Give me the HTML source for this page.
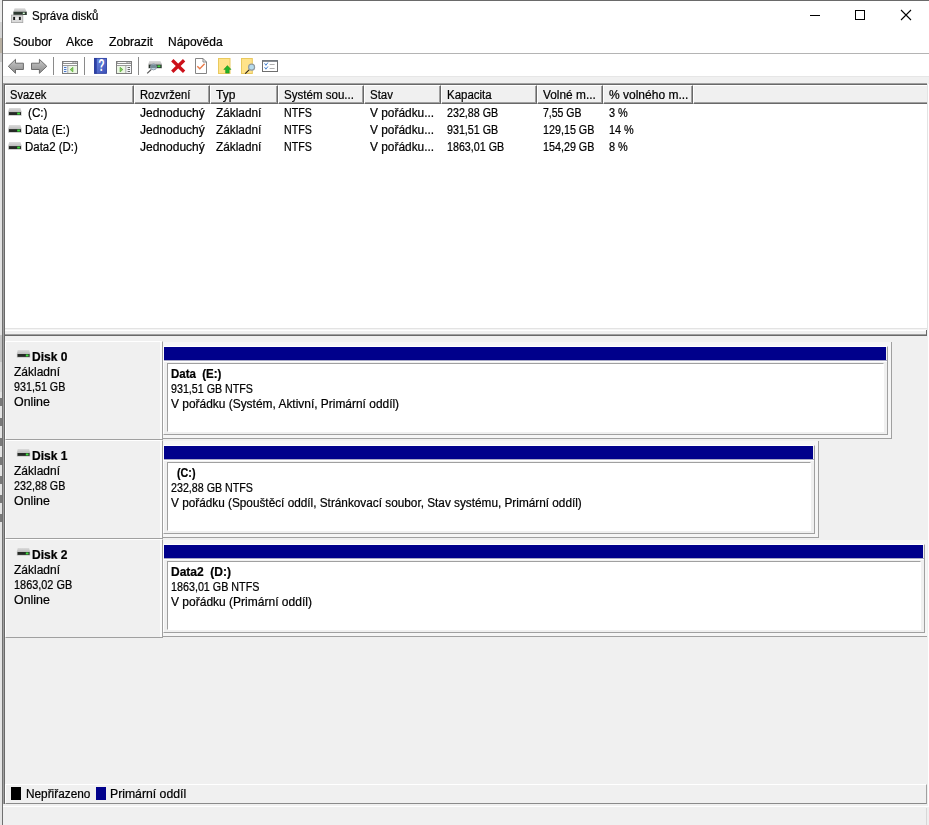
<!DOCTYPE html>
<html lang="cs"><head><meta charset="utf-8"><title>Správa disků</title>
<style>
html,body{margin:0;padding:0}
body{width:929px;height:825px;overflow:hidden;position:relative;background:#f0f0f0;font-family:"Liberation Sans",sans-serif;font-size:12px;color:#000}
div,span,svg{position:absolute;box-sizing:border-box}
.t{-webkit-text-stroke:.22px #000;transform-origin:0 0;white-space:pre;line-height:15px;height:15px;color:#000}
.w{background:#fff}
.hl{height:1px}
.vl{width:1px}
.hd{top:85px;height:19px;background:#f0f0f0;border-top:1px solid #fff;border-left:1px solid #fff;border-bottom:1px solid #696969;border-right:1px solid #696969}
.hd i{position:absolute;left:0;right:0;bottom:0;height:1px;background:#a0a0a0}
.hd b{position:absolute;top:0;bottom:0;right:0;width:1px;background:#a0a0a0}
.lab{box-shadow:inset -2px 0 0 #fbfbfb;left:5px;width:158px;height:99px;background:#f0f0f0;border-top:1px solid #fff;border-left:1px solid #fff;border-right:1px solid #a0a0a0;border-bottom:1px solid #a0a0a0}
.fr{left:163px;height:97px;background:#f6f6f6;border-right:1px solid #a0a0a0;border-bottom:1px solid #a0a0a0}
.pt{left:0;top:4px;height:89px;background:#f0f0f0;border-left:1px solid #fff;border-top:1px solid #fff;border-right:1px solid #a0a0a0;border-bottom:1px solid #a0a0a0}
.nv{left:0;top:0;right:1px;height:13px;background:#00008b}
.nl{left:0;right:0;top:13px;height:1px;background:#a9a9c4}
.nw{left:0;right:0;top:14px;height:1px;background:#fff}
.in{left:3px;right:3px;top:16px;bottom:2px;background:#fff;border-left:1px solid #a0a0a0;border-top:1px solid #a0a0a0;border-right:1px solid #fff;border-bottom:1px solid #fff}
#texts{left:0;top:0;width:929px;height:825px;will-change:transform}

</style></head>
<body>
<!-- desktop strip + window border -->
<div style="left:0;top:0;width:2px;height:825px;background:linear-gradient(#ececec 0,#ececec 22px,#d4d4d4 22px,#d4d4d4 38px,#b8b0a2 38px,#b8b0a2 53px,#c8c8c8 53px,#c8c8c8 62px,#e2e2e2 62px,#e2e2e2 335px,#c4c4c4 335px,#c4c4c4 362px,#d8d8d8 362px,#d8d8d8 392px,#e4e4e4 392px,#e4e4e4 825px)"></div><div style="left:0;top:398px;width:2px;height:8px;background:#555;opacity:.75"></div><div style="left:0;top:418px;width:2px;height:8px;background:#555;opacity:.75"></div><div style="left:0;top:438px;width:2px;height:8px;background:#555;opacity:.75"></div><div style="left:0;top:457px;width:2px;height:8px;background:#555;opacity:.75"></div><div style="left:0;top:476px;width:2px;height:8px;background:#555;opacity:.75"></div><div style="left:0;top:495px;width:2px;height:8px;background:#555;opacity:.75"></div><div style="left:0;top:514px;width:2px;height:8px;background:#555;opacity:.75"></div>
<div class="vl" style="left:2px;top:0;height:825px;background:#707070"></div>
<div class="hl" style="left:2px;top:0;width:927px;background:#6a6a6a"></div>
<!-- title + menu -->
<div class="w" style="left:3px;top:1px;width:926px;height:52px"></div>
<div class="hl" style="left:3px;top:53px;width:926px;background:#b4b4b4"></div>
<!-- toolbar -->
<div class="w" style="left:3px;top:54px;width:926px;height:22px"></div>
<div class="hl" style="left:3px;top:76px;width:926px;background:#e6e6e6"></div>
<!-- list view sunken border -->
<div class="hl" style="left:3px;top:83px;width:924px;background:#a0a0a0"></div>
<div class="hl" style="left:4px;top:84px;width:923px;background:#696969"></div>
<div class="vl" style="left:3px;top:83px;height:721px;background:#a0a0a0"></div>
<div class="vl" style="left:4px;top:84px;height:720px;background:#696969"></div>
<div class="w" style="left:5px;top:85px;width:922px;height:243px"></div>
<div class="vl" style="left:927px;top:84px;height:246px;background:#e3e3e3"></div>
<div class="vl" style="left:928px;top:84px;height:722px;background:#fff"></div>
<!-- header cells -->
<div class="hd" style="left:5px;width:129px"><i></i><b></b></div>
<div class="hd" style="left:134px;width:76px"><i></i><b></b></div>
<div class="hd" style="left:210px;width:68px"><i></i><b></b></div>
<div class="hd" style="left:278px;width:86px"><i></i><b></b></div>
<div class="hd" style="left:364px;width:77px"><i></i><b></b></div>
<div class="hd" style="left:441px;width:96px"><i></i><b></b></div>
<div class="hd" style="left:537px;width:66px"><i></i><b></b></div>
<div class="hd" style="left:603px;width:90px"><i></i><b></b></div>
<div class="hd" style="left:693px;width:234px;border-right:0"><i></i></div>
<!-- splitter -->
<div class="hl" style="left:5px;top:328px;width:922px;background:#e3e3e3"></div>
<div class="hl" style="left:5px;top:329px;width:922px;background:#f4f4f4"></div>
<div class="hl" style="left:5px;top:330px;width:922px;background:#fff"></div>
<div class="hl" style="left:5px;top:334px;width:922px;background:#a0a0a0"></div>
<div class="hl" style="left:5px;top:335px;width:922px;background:#696969"></div>
<div class="vl" style="left:926px;top:330px;height:6px;background:#696969"></div>
<div style="left:927px;top:330px;width:1px;height:476px;background:#f0f0f0"></div>
<!-- disk rows -->
<div class="lab" style="top:341px"></div>
<div class="lab" style="top:440px"></div>
<div class="lab" style="top:539px"></div>
<div class="fr" style="top:342px;width:729px"><div class="pt" style="width:725px"><div class="nv"></div><div class="nl"></div><div class="nw"></div><div class="in"></div></div></div>
<div class="fr" style="top:441px;width:656px"><div class="pt" style="width:652px"><div class="nv"></div><div class="nl"></div><div class="nw"></div><div class="in"></div></div></div>
<div class="fr" style="top:540px;width:764px;border-right:0"><div class="pt" style="width:762px"><div class="nv"></div><div class="nl"></div><div class="nw"></div><div class="in"></div></div></div>
<!-- legend -->
<div style="left:5px;top:784px;width:922px;height:20px;background:#f0f0f0;border-top:1px solid #fff;border-left:1px solid #fff;border-right:1px solid #a0a0a0;border-bottom:1px solid #8a8a8a"></div>
<div style="left:11px;top:787px;width:10px;height:13px;background:#000"></div>
<div style="left:96px;top:787px;width:10px;height:13px;background:#00008b"></div>
<!-- status bar -->
<div class="hl" style="left:3px;top:806px;width:926px;background:#fff"></div>
<div class="vl" style="left:926px;top:808px;height:17px;background:#d7d7d7"></div>
<svg style="left:0;top:0" width="929" height="825" viewBox="0 0 929 825">
<defs>
<linearGradient id="ga" x1="0" y1="0" x2="0" y2="1"><stop offset="0" stop-color="#cacaca"/><stop offset="1" stop-color="#8a8a8a"/></linearGradient>
<linearGradient id="gh" x1="0" y1="0" x2="1" y2="1"><stop offset="0" stop-color="#6f8be0"/><stop offset="1" stop-color="#3a50b8"/></linearGradient>
<linearGradient id="gd" x1="0" y1="0" x2="0" y2="1"><stop offset="0" stop-color="#dcdcdc"/><stop offset="1" stop-color="#bcbcbc"/></linearGradient>
</defs>
<!-- title icon -->
<g>
<polygon points="14.6,8.2 25,8.2 26.6,11.8 13.4,11.8" fill="url(#gd)"/>
<rect x="13.4" y="11.7" width="13.4" height="3.3" fill="#2e3a32"/>
<rect x="22.8" y="12.6" width="2" height="1.5" fill="#d8ffd8"/>
<rect x="11.4" y="15.1" width="11.4" height="7.5" fill="#dadada" stroke="#a4a4a4" stroke-width=".8"/>
<rect x="15" y="17.6" width="4" height="1.8" fill="#f4f4f4"/>
<rect x="13.2" y="16.9" width="1.9" height="3.1" fill="#1c1c1c"/>
<rect x="18.9" y="16.9" width="1.9" height="3.1" fill="#1c1c1c"/>
</g>
<!-- window controls -->
<rect x="810" y="15" width="10" height="1" fill="#000"/>
<rect x="855.5" y="10.5" width="9" height="9" fill="none" stroke="#000" stroke-width="1"/>
<path d="M901,10 L911,20 M911,10 L901,20" stroke="#000" stroke-width="1.1" fill="none"/>
<!-- toolbar: arrows -->
<polygon points="8.3,66.3 15.5,59.3 15.5,63.2 23.4,63.2 23.4,69.5 15.5,69.5 15.5,73.3" fill="url(#ga)" stroke="#6c6c6c" stroke-width="1" stroke-linejoin="round"/>
<polygon points="46.8,66.3 39.4,59.3 39.4,63.2 31.5,63.2 31.5,69.5 39.4,69.5 39.4,73.3" fill="url(#ga)" stroke="#6c6c6c" stroke-width="1" stroke-linejoin="round"/>
<!-- separators -->
<rect x="53" y="57" width="1" height="18" fill="#8a8a8a"/>
<rect x="84" y="57" width="1" height="18" fill="#8a8a8a"/>
<rect x="138" y="57" width="1" height="18" fill="#8a8a8a"/>
<!-- show/hide tree -->
<g>
<rect x="62.5" y="61.5" width="15" height="12" fill="#fff" stroke="#7d7d7d"/>
<rect x="63" y="62" width="14" height="2" fill="#909090"/>
<rect x="63.5" y="62" width="9" height="1" fill="#fafafa"/>
<rect x="73.6" y="62" width="1" height="1" fill="#fafafa"/><rect x="75.6" y="62" width="1" height="1" fill="#fafafa"/>
<rect x="63" y="65" width="14" height="1" fill="#9a9a9a"/>
<rect x="63" y="66" width="4.5" height="7" fill="#eef4fc"/>
<rect x="67.5" y="66" width="1" height="7" fill="#8c8c8c"/>
<rect x="68.5" y="66" width="8.5" height="7" fill="#ecf7e4"/>
<rect x="64" y="67" width="2.4" height="1" fill="#4a7ac8"/><rect x="64" y="69" width="2.4" height="1" fill="#4a7ac8"/><rect x="64" y="71" width="2.4" height="1" fill="#4a7ac8"/>
<polygon points="70.2,69.6 72.9,67.3 72.9,71.9" fill="#86cc5e" stroke="#58aa36" stroke-width=".7"/>
</g>
<!-- help -->
<g>
<rect x="94.2" y="58" width="12.6" height="15.6" fill="url(#gh)"/>
<rect x="94.2" y="58" width="2.6" height="15.6" fill="#2c42a6"/>
<rect x="94.5" y="58.3" width="12" height="15" fill="none" stroke="#2a3a98" stroke-width=".7"/>
<text transform="translate(101.3,71.4) scale(.64,1)" font-family="Liberation Sans, sans-serif" font-size="16.2" font-weight="bold" fill="#fff" text-anchor="middle">?</text>
</g>
<!-- action pane -->
<g>
<rect x="116.5" y="61.5" width="15" height="12" fill="#fff" stroke="#7d7d7d"/>
<rect x="117" y="62" width="14" height="2" fill="#909090"/>
<rect x="117.5" y="62" width="9" height="1" fill="#fafafa"/>
<rect x="127.6" y="62" width="1" height="1" fill="#fafafa"/><rect x="129.6" y="62" width="1" height="1" fill="#fafafa"/>
<rect x="117" y="65" width="14" height="1" fill="#9a9a9a"/>
<rect x="117" y="66" width="8.5" height="7" fill="#ecf7e4"/>
<rect x="125.5" y="66" width="1" height="7" fill="#8c8c8c"/>
<rect x="126.5" y="66" width="4.5" height="7" fill="#f4f6fa"/>
<rect x="127.6" y="67" width="2.4" height="1" fill="#6a6a6a"/><rect x="127.6" y="69" width="2.4" height="1" fill="#6a6a6a"/><rect x="127.6" y="71" width="2.4" height="1" fill="#6a6a6a"/>
<polygon points="122.8,69.6 120.1,67.3 120.1,71.9" fill="#86cc5e" stroke="#58aa36" stroke-width=".7"/>
</g>
<!-- disk + magnifier -->
<g>
<polygon points="149.4,61 160.4,61 162,64.3 148.2,64.3" fill="url(#gd)"/>
<rect x="148.2" y="64.2" width="13.8" height="4.4" fill="#c4c4c4"/>
<rect x="148.8" y="64.6" width="12.8" height="3.4" fill="#26322a"/>
<rect x="157.4" y="65.4" width="3" height="1.8" fill="#48d848"/>
<line x1="151.4" y1="69.4" x2="147.2" y2="73.4" stroke="#585858" stroke-width="1.3"/>
<circle cx="153.5" cy="66.9" r="3" fill="#a9c6dc" fill-opacity=".6" stroke="#8a98a6" stroke-width=".9"/>
</g>
<!-- red X -->
<path d="M172.3,60.2 L184.1,71.7 M184.1,60.2 L172.3,71.7" stroke="#cc101a" stroke-width="3.3" fill="none"/>
<!-- properties doc -->
<g>
<path d="M195.5,58.5 H203 L206.5,62 V73.5 H195.5 Z" fill="#fff" stroke="#858585"/>
<path d="M203,58.5 V62 H206.5" fill="none" stroke="#7c7c7c" stroke-width=".9"/>
<polyline points="197.3,66.2 199.8,68.8 204.6,63.8" fill="none" stroke="#ea7a48" stroke-width="1.35"/>
</g>
<!-- yellow up -->
<g>
<rect x="218.5" y="58.5" width="11.5" height="15" fill="#ffe38a" stroke="#e9c95e"/>
<polygon points="227.4,65.6 231,69.4 229.2,69.4 229.2,73.1 225.6,73.1 225.6,69.4 223.8,69.4" fill="#22b326" stroke="#1c8c1e" stroke-width=".5"/>
</g>
<!-- yellow search -->
<g>
<rect x="241.5" y="58.5" width="10.8" height="15" fill="#ffe38a" stroke="#e9c95e"/>
<line x1="249.6" y1="69.4" x2="245.2" y2="73.6" stroke="#2c2418" stroke-width="1.15"/>
<circle cx="251.6" cy="67.2" r="3" fill="#b6dcee" stroke="#909aa0" stroke-width="1.2"/>
</g>
<!-- checklist -->
<g>
<rect x="262.5" y="60.8" width="15" height="10.7" fill="#fff" stroke="#6e6e6e"/>
<rect x="262" y="60.2" width="16" height="1.5" fill="#6a7078"/>
<polyline points="264.6,63.3 265.9,65.3 267.9,62.6" fill="none" stroke="#3c7acc" stroke-width=".95"/>
<polyline points="264.6,67.2 265.9,69.2 267.9,66.5" fill="none" stroke="#3c7acc" stroke-width=".95"/>
<rect x="269.6" y="64" width="5" height="1" fill="#b0b0b0"/><rect x="269.6" y="68" width="5" height="1" fill="#b0b0b0"/>
</g>
<g transform="translate(8.2,108)"><polygon points="0.9,0 12.3,0 13.4,4 0,4" fill="url(#gd)"/><rect x="0" y="3.8" width="13.5" height="4" fill="#c6c6c6"/><rect x="0.7" y="4.1" width="12.1" height="2.9" fill="#262a26"/><rect x="9" y="4.6" width="2.7" height="1.9" fill="#3fe03f"/></g>
<g transform="translate(8.2,125)"><polygon points="0.9,0 12.3,0 13.4,4 0,4" fill="url(#gd)"/><rect x="0" y="3.8" width="13.5" height="4" fill="#c6c6c6"/><rect x="0.7" y="4.1" width="12.1" height="2.9" fill="#262a26"/><rect x="9" y="4.6" width="2.7" height="1.9" fill="#3fe03f"/></g>
<g transform="translate(8.2,142)"><polygon points="0.9,0 12.3,0 13.4,4 0,4" fill="url(#gd)"/><rect x="0" y="3.8" width="13.5" height="4" fill="#c6c6c6"/><rect x="0.7" y="4.1" width="12.1" height="2.9" fill="#262a26"/><rect x="9" y="4.6" width="2.7" height="1.9" fill="#3fe03f"/></g>
<g transform="translate(16.8,349.9)"><polygon points="0.9,0 12.3,0 13.4,4 0,4" fill="url(#gd)"/><rect x="0" y="3.8" width="13.5" height="4" fill="#c6c6c6"/><rect x="0.7" y="4.1" width="12.1" height="2.9" fill="#262a26"/><rect x="9" y="4.6" width="2.7" height="1.9" fill="#3fe03f"/></g>
<g transform="translate(16.8,448.9)"><polygon points="0.9,0 12.3,0 13.4,4 0,4" fill="url(#gd)"/><rect x="0" y="3.8" width="13.5" height="4" fill="#c6c6c6"/><rect x="0.7" y="4.1" width="12.1" height="2.9" fill="#262a26"/><rect x="9" y="4.6" width="2.7" height="1.9" fill="#3fe03f"/></g>
<g transform="translate(16.8,547.9)"><polygon points="0.9,0 12.3,0 13.4,4 0,4" fill="url(#gd)"/><rect x="0" y="3.8" width="13.5" height="4" fill="#c6c6c6"/><rect x="0.7" y="4.1" width="12.1" height="2.9" fill="#262a26"/><rect x="9" y="4.6" width="2.7" height="1.9" fill="#3fe03f"/></g>
</svg>

<div id="texts">
<span class="t" style="left:31.63px;top:8.83px;transform:scaleX(0.9571)">Správa disků</span>
<span class="t" style="left:12.70px;top:35.03px;transform:scaleX(1.0051)">Soubor</span>
<span class="t" style="left:66.49px;top:35.03px;transform:scaleX(1.0192)">Akce</span>
<span class="t" style="left:108.59px;top:35.03px;transform:scaleX(1.0148)">Zobrazit</span>
<span class="t" style="left:167.70px;top:35.03px;transform:scaleX(0.9978)">Nápověda</span>
<span class="t" style="left:10.45px;top:87.53px;transform:scaleX(0.9248)">Svazek</span>
<span class="t" style="left:139.65px;top:87.53px;transform:scaleX(0.9328)">Rozvržení</span>
<span class="t" style="left:215.80px;top:87.53px;transform:scaleX(1.0029)">Typ</span>
<span class="t" style="left:283.73px;top:87.53px;transform:scaleX(0.9628)">Systém sou...</span>
<span class="t" style="left:369.63px;top:87.53px;transform:scaleX(0.9535)">Stav</span>
<span class="t" style="left:447.13px;top:87.53px;transform:scaleX(0.9550)">Kapacita</span>
<span class="t" style="left:542.91px;top:87.53px;transform:scaleX(0.9892)">Volné m...</span>
<span class="t" style="left:609.30px;top:87.53px;transform:scaleX(1.0003)">% volného m...</span>
<span class="t" style="left:27.72px;top:105.53px;transform:scaleX(0.9750)">(C:)</span>
<span class="t" style="left:139.60px;top:105.53px;transform:scaleX(1.0013)">Jednoduchý</span>
<span class="t" style="left:215.71px;top:105.53px;transform:scaleX(0.9863)">Základní</span>
<span class="t" style="left:283.78px;top:105.53px;transform:scaleX(0.8869)">NTFS</span>
<span class="t" style="left:369.61px;top:105.53px;transform:scaleX(0.9904)">V pořádku...</span>
<span class="t" style="left:446.88px;top:105.53px;transform:scaleX(0.8924)">232,88 GB</span>
<span class="t" style="left:542.99px;top:105.53px;transform:scaleX(0.8744)">7,55 GB</span>
<span class="t" style="left:609.36px;top:105.53px;transform:scaleX(0.9088)">3 %</span>
<span class="t" style="left:24.65px;top:122.53px;transform:scaleX(0.9289)">Data (E:)</span>
<span class="t" style="left:139.60px;top:122.53px;transform:scaleX(1.0013)">Jednoduchý</span>
<span class="t" style="left:215.71px;top:122.53px;transform:scaleX(0.9863)">Základní</span>
<span class="t" style="left:283.78px;top:122.53px;transform:scaleX(0.8869)">NTFS</span>
<span class="t" style="left:369.61px;top:122.53px;transform:scaleX(0.9904)">V pořádku...</span>
<span class="t" style="left:446.88px;top:122.53px;transform:scaleX(0.8924)">931,51 GB</span>
<span class="t" style="left:542.97px;top:122.53px;transform:scaleX(0.8959)">129,15 GB</span>
<span class="t" style="left:609.37px;top:122.53px;transform:scaleX(0.9065)">14 %</span>
<span class="t" style="left:24.63px;top:139.53px;transform:scaleX(0.9538)">Data2 (D:)</span>
<span class="t" style="left:139.60px;top:139.53px;transform:scaleX(1.0013)">Jednoduchý</span>
<span class="t" style="left:215.71px;top:139.53px;transform:scaleX(0.9863)">Základní</span>
<span class="t" style="left:283.78px;top:139.53px;transform:scaleX(0.8869)">NTFS</span>
<span class="t" style="left:369.61px;top:139.53px;transform:scaleX(0.9904)">V pořádku...</span>
<span class="t" style="left:446.88px;top:139.53px;transform:scaleX(0.8913)">1863,01 GB</span>
<span class="t" style="left:542.97px;top:139.53px;transform:scaleX(0.8959)">154,29 GB</span>
<span class="t" style="left:609.36px;top:139.53px;transform:scaleX(0.9088)">8 %</span>
<span class="t" style="left:31.80px;top:349.53px;transform:scaleX(1.0011);font-weight:bold">Disk 0</span>
<span class="t" style="left:13.70px;top:364.53px;transform:scaleX(0.9993)">Základní</span>
<span class="t" style="left:13.77px;top:379.53px;transform:scaleX(0.8959)">931,51 GB</span>
<span class="t" style="left:13.68px;top:394.53px;transform:scaleX(1.0350)">Online</span>
<span class="t" style="left:170.53px;top:366.53px;transform:scaleX(0.9569);font-weight:bold">Data  (E:)</span>
<span class="t" style="left:170.58px;top:381.53px;transform:scaleX(0.8909)">931,51 GB NTFS</span>
<span class="t" style="left:170.50px;top:396.53px;transform:scaleX(0.9942)">V pořádku (Systém, Aktivní, Primární oddíl)</span>
<span class="t" style="left:31.80px;top:448.53px;transform:scaleX(1.0011);font-weight:bold">Disk 1</span>
<span class="t" style="left:13.70px;top:463.53px;transform:scaleX(0.9993)">Základní</span>
<span class="t" style="left:13.77px;top:478.53px;transform:scaleX(0.8959)">232,88 GB</span>
<span class="t" style="left:13.68px;top:493.53px;transform:scaleX(1.0350)">Online</span>
<span class="t" style="left:176.87px;top:465.53px;transform:scaleX(0.8956);font-weight:bold">(C:)</span>
<span class="t" style="left:170.58px;top:480.53px;transform:scaleX(0.8909)">232,88 GB NTFS</span>
<span class="t" style="left:170.51px;top:495.53px;transform:scaleX(0.9823)">V pořádku (Spouštěcí oddíl, Stránkovací soubor, Stav systému, Primární oddíl)</span>
<span class="t" style="left:31.80px;top:547.53px;transform:scaleX(1.0011);font-weight:bold">Disk 2</span>
<span class="t" style="left:13.70px;top:562.53px;transform:scaleX(0.9993)">Základní</span>
<span class="t" style="left:13.76px;top:577.53px;transform:scaleX(0.9085)">1863,02 GB</span>
<span class="t" style="left:13.68px;top:592.53px;transform:scaleX(1.0350)">Online</span>
<span class="t" style="left:170.90px;top:564.53px;transform:scaleX(0.9997);font-weight:bold">Data2  (D:)</span>
<span class="t" style="left:170.57px;top:579.53px;transform:scaleX(0.8955)">1863,01 GB NTFS</span>
<span class="t" style="left:170.50px;top:594.53px;transform:scaleX(1.0012)">V pořádku (Primární oddíl)</span>
<span class="t" style="left:25.61px;top:786.53px;transform:scaleX(0.9851)">Nepřiřazeno</span>
<span class="t" style="left:110.19px;top:786.53px;transform:scaleX(1.0187)">Primární oddíl</span>
</div>
</body></html>
